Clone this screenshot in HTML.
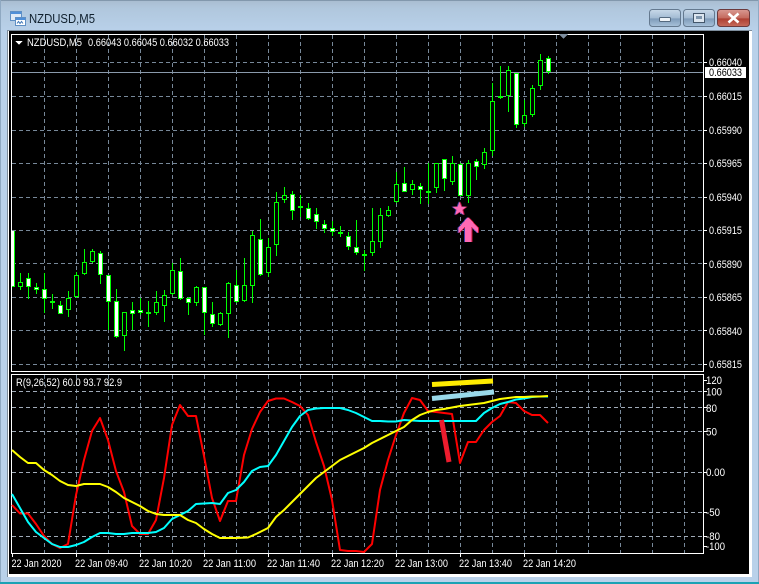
<!DOCTYPE html>
<html><head><meta charset="utf-8"><title>NZDUSD,M5</title>
<style>html,body{margin:0;padding:0;background:#b9d1ea}svg{display:block}text{font-family:"Liberation Sans",sans-serif;font-size:11px;fill:#fff}</style>
</head><body>
<svg width="759" height="584" viewBox="0 0 759 584" xmlns="http://www.w3.org/2000/svg">
<defs>
<linearGradient id="f" x1="0" y1="0" x2="0" y2="1"><stop offset="0" stop-color="#a8bcd0"/><stop offset=".25" stop-color="#b0c7dd"/><stop offset="1" stop-color="#b9d1ea"/></linearGradient>
<linearGradient id="b" x1="0" y1="0" x2="0" y2="1"><stop offset="0" stop-color="#c9d9e9"/><stop offset=".5" stop-color="#a3bbd3"/><stop offset=".55" stop-color="#7f9cba"/><stop offset="1" stop-color="#a8c2da"/></linearGradient>
<linearGradient id="c" x1="0" y1="0" x2="0" y2="1"><stop offset="0" stop-color="#d99a92"/><stop offset=".5" stop-color="#c46a5e"/><stop offset=".55" stop-color="#ae3f32"/><stop offset="1" stop-color="#c66c5c"/></linearGradient>
</defs>
<rect width="759" height="584" fill="#b9d1ea"/>
<rect width="759" height="32" fill="url(#f)"/>
<rect x="0" y="0" width="759" height="1" fill="#8298ad"/>
<rect x="0" y="582" width="759" height="2" fill="#1ba2b4"/>
<rect x="758" y="0" width="1" height="582" fill="#8fa9c2"/>
<rect x="0" y="0" width="1" height="582" fill="#8fa9c2"/>

<!-- title icon -->
<g shape-rendering="crispEdges">
<rect x="10.5" y="11.5" width="11" height="9" fill="#dfeaf6" stroke="#5f8fc4"/>
<rect x="11" y="12" width="10" height="2" fill="#4f8fd8"/>
<rect x="15.5" y="17.5" width="10" height="8" fill="#fff" stroke="#5f8fc4"/>
<rect x="16" y="18" width="9" height="2" fill="#4f8fd8"/>
</g>
<path d="M17 23.5l1.5-2 1.5 2 1.5-2 1.5 2" fill="none" stroke="#3f78b8" stroke-width="1"/>
<text x="29" y="23" textLength="66" lengthAdjust="spacingAndGlyphs" style="font-size:12.5px;fill:#10202e">NZDUSD,M5</text>

<!-- buttons -->
<rect x="649.5" y="9.5" width="31" height="17" rx="3" fill="url(#b)" stroke="#64798f"/>
<rect x="659.5" y="17.5" width="11" height="4" rx="1" fill="#eef3f8" stroke="#54697f"/>
<rect x="683.5" y="9.5" width="31" height="17" rx="3" fill="url(#b)" stroke="#64798f"/>
<rect x="693.5" y="13.5" width="11" height="9" fill="#dce6f0" stroke="#43566a"/>
<rect x="696" y="16" width="6" height="3" fill="#7f96ad"/>
<rect x="717.5" y="9.5" width="32" height="17" rx="3" fill="url(#c)" stroke="#6b3a3d"/>
<path d="M728.5 13.5l5 4.500 5-4.500M728.5 22.500l5-4.500 5 4.500" fill="none" stroke="#fff" stroke-width="2.6"/>

<!-- client -->
<g shape-rendering="crispEdges">
<rect x="7" y="30" width="745" height="547" fill="#fff"/>
<rect x="7" y="30" width="745" height="1" fill="#7d8c9b"/>
<rect x="7" y="30" width="1" height="547" fill="#7d8c9b"/>
<rect x="9" y="31" width="740" height="543" fill="#000"/>

<path d="M11.5 34.5H703.5V371.5H11.5Z" fill="none" stroke="#fff"/>
<path d="M11.5 374.5H703.5V553.5H11.5Z" fill="none" stroke="#fff"/>

<!-- grid -->
<path d="M44.5 35V371M76.5 35V371M108.5 35V371M140.5 35V371M172.5 35V371M204.5 35V371M236.5 35V371M268.5 35V371M300.5 35V371M332.5 35V371M364.5 35V371M396.5 35V371M428.5 35V371M460.5 35V371M492.5 35V371M524.5 35V371M556.5 35V371M588.5 35V371M620.5 35V371M652.5 35V371M684.5 35V371M44.5 375V553M76.5 375V553M108.5 375V553M140.5 375V553M172.5 375V553M204.5 375V553M236.5 375V553M268.5 375V553M300.5 375V553M332.5 375V553M364.5 375V553M396.5 375V553M428.5 375V553M460.5 375V553M492.5 375V553M524.5 375V553M556.5 375V553M588.5 375V553M620.5 375V553M652.5 375V553M684.5 375V553" stroke="#778899" stroke-dasharray="4 3" fill="none"/>
<path d="M12 62.5H703M12 96.5H703M12 130.5H703M12 163.5H703M12 197.5H703M12 230.5H703M12 263.5H703M12 297.5H703M12 330.5H703M12 364.5H703" stroke="#778899" stroke-dasharray="4 3" fill="none"/>
<path d="M12 391.5H703M12 407.5H703M12 431.5H703M12 472.5H703M12 512.5H703M12 536.5H703" stroke="#a0abb8" stroke-dasharray="4 3" fill="none"/>
<rect x="12" y="72" width="691" height="1" fill="#8a9aac"/>

<!-- axis ticks -->
<path d="M704 62.5h3M704 96.5h3M704 130.5h3M704 163.5h3M704 197.5h3M704 230.5h3M704 263.5h3M704 297.5h3M704 330.5h3M704 364.5h3M704 380.5h3M704 391.5h3M704 407.5h3M704 431.5h3M704 472.5h3M704 512.5h3M704 536.5h3M704 546.5h3M12.5 554v3M76.5 554v3M140.5 554v3M204.5 554v3M268.5 554v3M332.5 554v3M396.5 554v3M460.5 554v3M524.5 554v3" stroke="#fff" fill="none"/>

<!-- candles -->
<path fill="none" stroke="#00ff00" d="M20.5 273V290M28.5 273V299M36.5 283V294M44.5 273V313M52.5 294V309M60.5 301V314M68.5 291V317M76.5 272V298M84.5 249V275M92.5 249V263M100.5 251V284M108.5 275V330M116.5 289V338M124.5 312V351M132.5 302V330M140.5 298V315M148.5 301V327M156.5 291V315M164.5 290V322M172.5 263V295M180.5 258V300M188.5 297V315M196.5 286V306M204.5 287V335M212.5 302V327M220.5 312V326M228.5 282V338M236.5 270V303M244.5 258V302M252.5 231V303M260.5 219V276M268.5 238V277M276.5 192V256M284.5 187V203M292.5 191V220M300.5 195V217M308.5 203V220M316.5 208V229M324.5 220V233M332.5 221V236M340.5 226V237M348.5 232V250M356.5 220V255M364.5 250V271M372.5 208V256M380.5 208V248M388.5 206V217M396.5 172V203M404.5 167V192M412.5 180V195M420.5 183V204M428.5 163V204M436.5 163V193M444.5 159V191M452.5 156V185M460.5 163V196M468.5 160V203M476.5 159V180M484.5 148V169M492.5 83V156M500.5 66V99M508.5 66V112M516.5 73V128M524.5 100V127M532.5 85V117M540.5 54V90M548.5 56V74"/>
<rect x="12" y="231" width="2" height="56" fill="#fff"/>
<rect x="14" y="231" width="1" height="56" fill="#00ff00"/>
<rect x="12" y="286" width="2" height="1" fill="#00ff00"/>
<path fill="#fff" stroke="#00ff00" d="M26.5 278.5h4V286.5h-4zM34.5 287.5h4V289.5h-4zM42.5 289.5h4V298.5h-4zM58.5 305.5h4V313.5h-4zM98.5 253.5h4V274.5h-4zM106.5 275.5h4V301.5h-4zM114.5 301.5h4V336.5h-4zM130.5 310.5h4V313.5h-4zM138.5 310.5h4V312.5h-4zM178.5 271.5h4V298.5h-4zM186.5 298.5h4V302.5h-4zM202.5 287.5h4V312.5h-4zM210.5 314.5h4V323.5h-4zM234.5 285.5h4V301.5h-4zM258.5 239.5h4V274.5h-4zM290.5 194.5h4V210.5h-4zM306.5 208.5h4V218.5h-4zM314.5 214.5h4V221.5h-4zM322.5 224.5h4V228.5h-4zM330.5 228.5h4V231.5h-4zM338.5 232.5h4V233.5h-4zM346.5 236.5h4V246.5h-4zM354.5 247.5h4V252.5h-4zM402.5 183.5h4V191.5h-4zM418.5 186.5h4V189.5h-4zM442.5 159.5h4V178.5h-4zM458.5 164.5h4V195.5h-4zM474.5 161.5h4V166.5h-4zM498.5 96.5h4V97.5h-4zM514.5 73.5h4V124.5h-4zM546.5 58.5h4V71.5h-4z"/>
<path fill="#000" stroke="#00ff00" d="M18.5 282.5h4V286.5h-4zM66.5 298.5h4V309.5h-4zM74.5 275.5h4V296.5h-4zM82.5 262.5h4V273.5h-4zM90.5 251.5h4V261.5h-4zM122.5 312.5h4V335.5h-4zM154.5 302.5h4V312.5h-4zM162.5 295.5h4V305.5h-4zM170.5 270.5h4V293.5h-4zM194.5 287.5h4V302.5h-4zM218.5 313.5h4V324.5h-4zM226.5 283.5h4V313.5h-4zM242.5 285.5h4V300.5h-4zM250.5 235.5h4V285.5h-4zM266.5 247.5h4V272.5h-4zM274.5 202.5h4V244.5h-4zM282.5 195.5h4V199.5h-4zM370.5 241.5h4V252.5h-4zM378.5 215.5h4V241.5h-4zM386.5 210.5h4V215.5h-4zM394.5 184.5h4V201.5h-4zM410.5 184.5h4V189.5h-4zM434.5 163.5h4V187.5h-4zM450.5 163.5h4V181.5h-4zM466.5 163.5h4V195.5h-4zM482.5 152.5h4V164.5h-4zM490.5 101.5h4V150.5h-4zM506.5 70.5h4V95.5h-4zM522.5 115.5h4V123.5h-4zM530.5 88.5h4V114.5h-4zM538.5 60.5h4V85.5h-4zM50.5 301.5h4V302.5h-4zM146.5 312.5h4V313.5h-4zM298.5 206.5h4V207.5h-4zM362.5 254.5h4V255.5h-4zM426.5 191.5h4V192.5h-4z"/>
<path d="M559 34h9l-4.500 5z" fill="#7f8fa0"/>
<path d="M15.500 41h7l-3.500 4z" fill="#fff"/>
<rect x="705" y="67" width="41" height="11" fill="#fff"/>
</g>

<!-- star and arrow -->
<g transform="translate(-1 0)"><path d="M459.500 201.500L461.300 206.600 466.600 206.700 462.400 209.900 463.900 215.100 459.500 212 455.100 215.100 456.600 209.900 452.400 206.700 457.700 206.600Z" fill="#3c3ca8"/></g>
<g transform="translate(1 0)"><path d="M459.500 201.500L461.300 206.600 466.600 206.700 462.400 209.900 463.900 215.100 459.500 212 455.100 215.100 456.600 209.900 452.400 206.700 457.700 206.600Z" fill="#b01040"/></g>
<path d="M459.500 201.500L461.300 206.600 466.600 206.700 462.400 209.900 463.900 215.100 459.500 212 455.100 215.100 456.600 209.900 452.400 206.700 457.700 206.600Z" fill="#ff69b4"/>
<g shape-rendering="crispEdges">
<path transform="translate(-1 0)" d="M468 217L478 228V233L471.500 227V242H465V227L458.500 233V228Z" fill="#3c3ca8"/>
<path transform="translate(1 0)" d="M468 217L478 228V233L471.500 227V242H465V227L458.500 233V228Z" fill="#c01030"/>
<path d="M468 217L478 228V233L471.500 227V242H465V227L458.500 233V228Z" fill="#ff69b4"/>
</g>

<!-- indicators -->
<g fill="none" stroke-width="2" stroke-linejoin="round">
<path stroke="#ff0000" d="M12 505L20 513.500 28 513.500 36 524 44 536 52 544 60 548 68 544 76 495 84 460 92 431 100 418 108 440 116 471 124 492 132 526 140 534 148 534 156 520 164 478 172 425 180 405 188 416 196 416 204 456 212 498 220 521 228 501 236 501 244 455 252 429 260 412 268 401 276 398.500 284 398.500 292 402 300 406 308 415 316 442 324 466 332 500 340 550 348 551 356 551 364 552 372 544 380 490 388 460 396 435 404 413 412 398 420 400 428 411 436 412 444 413 452 414 460 463 468 442 476 442 484 430 492 422 500 416 508 402 516 403 524 411 532 415 540 415 548 423"/>
<path stroke="#00ffff" d="M12 494L20 508 28 522 36 532 44 538 52 544 60 547 68 547 76 545 84 542 92 537 100 533 108 533 116 534 124 534 132 533 140 533 148 533 156 532 164 528 172 519 180 515 188 511 196 504 204 503.500 212 503 220 504 228 493 236 490 244 482 252 471 260 467 268 466 276 455 284 441 292 427 300 416 308 410 316 408.500 324 408 332 408 340 408 348 410 356 413 364 417 372 421 380 421 388 421.500 396 421.500 404 420 412 420.500 420 421 476 421 484 413 492 408 500 404 508 402 516 399.500 524 398.500 532 397 540 396.500 548 396.500"/>
<path stroke="#ffff00" d="M12 450L20 457 28 463 36 463 44 470 52 475 60 481 68 485 76 486 84 484 92 484 100 484 108 487 116 492 124 498 132 502 140 506 148 511 156 514 164 515 172 515 180 515 188 520 196 523 204 529 212 534 220 538 228 538 236 538 248 537.500 256 534 268 528 276 517 284 510 292 502 300 494 308 486 316 478 324 472 332 466 340 460 348 456 356 452 364 448 372 443 380 439 388 435 396 431 404 427 412 420 420 415 428 412 436 410 444 409 452 407.500 460 406 468 405 476 404 484 403 492 401 500 399 508 398 516 397 524 397 532 396.500 540 396.500 548 396"/>
</g>
<path d="M441.500 420L449 462" stroke="#ee1c2e" stroke-width="5" fill="none"/>
<path d="M432 384.500L493 381" stroke="#ffec00" stroke-width="5" fill="none"/>
<path d="M432 398.500L494 392" stroke="#99d9ea" stroke-width="5" fill="none"/>

<!-- labels -->
<g lengthAdjust="spacingAndGlyphs">
<text x="27" y="46" textLength="55" lengthAdjust="spacingAndGlyphs">NZDUSD,M5</text>
<text x="88" y="46" textLength="141" lengthAdjust="spacingAndGlyphs">0.66043 0.66045 0.66032 0.66033</text>
<text x="16" y="386" textLength="106" lengthAdjust="spacingAndGlyphs">R(9,26,52) 60.0 93.7 92.9</text>
<text x="709" y="66" textLength="33" lengthAdjust="spacingAndGlyphs">0.66040</text>
<text x="709" y="76" textLength="33" lengthAdjust="spacingAndGlyphs" style="fill:#000">0.66033</text>
<text x="709" y="100" textLength="33" lengthAdjust="spacingAndGlyphs">0.66015</text>
<text x="709" y="134" textLength="33" lengthAdjust="spacingAndGlyphs">0.65990</text>
<text x="709" y="167" textLength="33" lengthAdjust="spacingAndGlyphs">0.65965</text>
<text x="709" y="201" textLength="33" lengthAdjust="spacingAndGlyphs">0.65940</text>
<text x="709" y="234" textLength="33" lengthAdjust="spacingAndGlyphs">0.65915</text>
<text x="709" y="268" textLength="33" lengthAdjust="spacingAndGlyphs">0.65890</text>
<text x="709" y="301" textLength="33" lengthAdjust="spacingAndGlyphs">0.65865</text>
<text x="709" y="335" textLength="33" lengthAdjust="spacingAndGlyphs">0.65840</text>
<text x="709" y="368" textLength="33" lengthAdjust="spacingAndGlyphs">0.65815</text>
<text x="706" y="384" textLength="16" lengthAdjust="spacingAndGlyphs">120</text>
<text x="706" y="395.500" textLength="16" lengthAdjust="spacingAndGlyphs">100</text>
<text x="706" y="412" textLength="11" lengthAdjust="spacingAndGlyphs">80</text>
<text x="706" y="435.500" textLength="11" lengthAdjust="spacingAndGlyphs">50</text>
<text x="706" y="476" textLength="19" lengthAdjust="spacingAndGlyphs">0.00</text>
<text x="706" y="516" textLength="14" lengthAdjust="spacingAndGlyphs">-50</text>
<text x="706" y="540" textLength="14" lengthAdjust="spacingAndGlyphs">-80</text>
<text x="706" y="550" textLength="19" lengthAdjust="spacingAndGlyphs">-100</text>
<text x="11.500" y="567" textLength="50" lengthAdjust="spacingAndGlyphs">22 Jan 2020</text>
<text x="75" y="567" textLength="53" lengthAdjust="spacingAndGlyphs">22 Jan 09:40</text>
<text x="139" y="567" textLength="53" lengthAdjust="spacingAndGlyphs">22 Jan 10:20</text>
<text x="203" y="567" textLength="53" lengthAdjust="spacingAndGlyphs">22 Jan 11:00</text>
<text x="267" y="567" textLength="53" lengthAdjust="spacingAndGlyphs">22 Jan 11:40</text>
<text x="331" y="567" textLength="53" lengthAdjust="spacingAndGlyphs">22 Jan 12:20</text>
<text x="395" y="567" textLength="53" lengthAdjust="spacingAndGlyphs">22 Jan 13:00</text>
<text x="459" y="567" textLength="53" lengthAdjust="spacingAndGlyphs">22 Jan 13:40</text>
<text x="523" y="567" textLength="53" lengthAdjust="spacingAndGlyphs">22 Jan 14:20</text>
</g>
</svg>
</body></html>
